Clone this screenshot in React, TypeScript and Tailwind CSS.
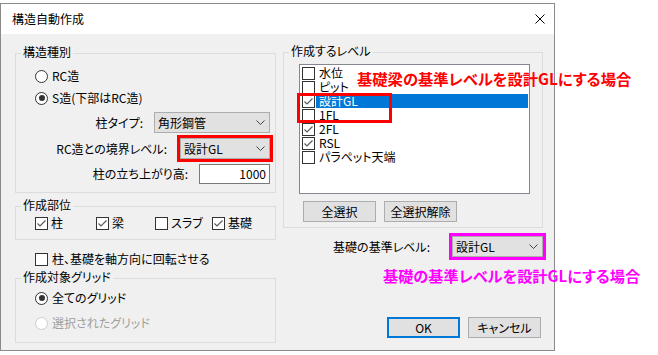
import React from "react";

function Group({ title, className = "", children }: { title: string; className?: string; children?: React.ReactNode }) {
  return (
    <div className={"relative border border-[#dcdcdc] " + className}>
      <span className="absolute -top-[10px] left-[5px] bg-[#f0f0f0] px-[2px] leading-[16px]">{title}</span>
      {children}
    </div>
  );
}

function Box({ checked }: { checked?: boolean }) {
  return (
    <span className="flex h-[13px] w-[13px] shrink-0 items-center justify-center border border-[#333333] bg-white">
      {checked && (
        <svg width="11" height="11" viewBox="0 0 11 11">
          <path d="M1.5 5.5 L4 8 L9.5 2.5" fill="none" stroke="#5a5a5a" strokeWidth="1.2" />
        </svg>
      )}
    </span>
  );
}

function Radio({ label, checked, disabled }: { label: string; checked?: boolean; disabled?: boolean }) {
  return (
    <div className="flex h-[14px] items-center gap-[4px]">
      <span
        className={
          "flex h-[13px] w-[13px] items-center justify-center rounded-full border bg-white " +
          (disabled ? "border-[#cccccc]" : "border-[#333333]")
        }
      >
        {checked && <span className="h-[6px] w-[6px] rounded-full bg-[#333333]" />}
      </span>
      <span className={disabled ? "text-[#a0a0a0]" : "text-black"}>{label}</span>
    </div>
  );
}

function Combo({ value, className = "" }: { value: string; className?: string }) {
  return (
    <div className={"flex h-[21px] items-center justify-between border border-[#adadad] bg-[#e1e1e1] pl-[3px] pr-[4px] " + className}>
      <span>{value}</span>
      <svg width="9" height="5" viewBox="0 0 9 5">
        <path d="M0.5 0.5 L4.5 4.5 L8.5 0.5" fill="none" stroke="#444444" strokeWidth="1" />
      </svg>
    </div>
  );
}

function Btn({ label, primary }: { label: string; primary?: boolean }) {
  return (
    <div
      className={
        "flex h-[21px] w-[73px] items-center justify-center bg-[#e1e1e1] " +
        (primary ? "border-2 border-[#0078d7]" : "border border-[#adadad]")
      }
    >
      {label}
    </div>
  );
}

const levels = [
  { name: "水位", checked: false },
  { name: "ピット", checked: false },
  { name: "設計GL", checked: true, selected: true },
  { name: "1FL", checked: false },
  { name: "2FL", checked: true },
  { name: "RSL", checked: true },
  { name: "パラペット天端", checked: false },
];

export default function App() {
  return (
    <div className="relative h-[355px] w-[658px] overflow-hidden bg-white pt-[3px] font-['Noto_Sans_CJK_JP','Noto_Sans_CJK_SC',sans-serif] text-[12px] leading-[14px] text-black [font-feature-settings:'palt']">
      {/* dialog */}
      <div className="h-[348px] w-[555px] border border-[#8a8a8a] bg-[#f0f0f0]">
        <div className="flex h-[30px] items-center justify-between bg-white pl-[11px] pr-[9px]">
          <span>構造自動作成</span>
          <svg width="10" height="10" viewBox="0 0 10 10">
            <path d="M0.5 0.5 L9.5 9.5 M9.5 0.5 L0.5 9.5" stroke="#000000" strokeWidth="1" />
          </svg>
        </div>

        <div className="flex pl-[14px]">
          {/* left column */}
          <div className="flex w-[261px] flex-col">
            <Group title="構造種別" className="mt-[19px] h-[140px] pl-[19px] pr-[5px] pt-[15px]">
              <Radio label="RC造" />
              <div className="mt-[8px]">
                <Radio label="S造(下部はRC造)" checked />
              </div>
              <div className="mt-[7px] flex items-center justify-end gap-[11px]">
                <span>柱タイプ:</span>
                <Combo value="角形鋼管" className="w-[116px]" />
              </div>
              <div className="mt-[5px] flex items-center justify-end gap-[13px]">
                <span>RC造との境界レベル:</span>
                <Combo value="設計GL" className="w-[90px] outline-3 outline-[#ff0000]" />
              </div>
              <div className="mt-[5px] flex items-center justify-end gap-[11px]">
                <span>柱の立ち上がり高:</span>
                <div className="flex h-[20px] w-[71px] items-center justify-end border border-[#7a7a7a] bg-white pr-[3px]">1000</div>
              </div>
            </Group>

            <Group title="作成部位" className="mt-[13px] h-[34px] pl-[19px] pt-[9px]">
              <div className="flex items-center">
                <div className="flex w-[61px] items-center gap-[3px]">
                  <Box checked />
                  <span>柱</span>
                </div>
                <div className="flex w-[59px] items-center gap-[3px]">
                  <Box checked />
                  <span>梁</span>
                </div>
                <div className="flex w-[57px] items-center gap-[3px]">
                  <Box />
                  <span>スラブ</span>
                </div>
                <div className="flex items-center gap-[3px]">
                  <Box checked />
                  <span>基礎</span>
                </div>
              </div>
            </Group>

            <div className="ml-[20px] mt-[12px] flex items-center gap-[4px]">
              <Box />
              <span>柱、基礎を軸方向に回転させる</span>
            </div>

            <Group title="作成対象グリッド" className="mt-[12px] h-[65px] pl-[19px] pt-[12px]">
              <Radio label="全てのグリッド" checked />
              <div className="mt-[11px]">
                <Radio label="選択されたグリッド" disabled />
              </div>
            </Group>
          </div>

          {/* right column */}
          <div className="ml-[7px] flex w-[260px] flex-col">
            <Group title="作成するレベル" className="mt-[18px] h-[176px]">
              <div className="ml-[15px] mt-[11px] h-[130px] w-[231px] border border-[#828790] bg-white pl-[2px] pr-[1px] pt-[1px]">
                {levels.map((l) => (
                  <div key={l.name} className="flex h-[14px] items-center">
                    <Box checked={l.checked} />
                    <span
                      className={
                        "ml-[1px] flex h-[14px] flex-1 items-center pl-[3px] " +
                        (l.selected ? "bg-[#0078d7] text-white" : "")
                      }
                    >
                      {l.name}
                    </span>
                  </div>
                ))}
              </div>
              <div className="ml-[19px] mt-[7px] flex gap-[8px]">
                <Btn label="全選択" />
                <Btn label="全選択解除" />
              </div>
            </Group>

            <div className="mt-[8px] flex items-center justify-end gap-[22px]">
              <span>基礎の基準レベル:</span>
              <Combo value="設計GL" className="w-[91px] outline-3 outline-[#ff00ff]" />
            </div>

            <div className="mt-[60px] flex justify-end gap-[8px] pr-[2px]">
              <Btn label="OK" primary />
              <Btn label="キャンセル" />
            </div>
          </div>
        </div>
      </div>

      {/* annotations */}
      <div className="absolute left-[297px] top-[93px] h-[30px] w-[95px] border-3 border-[#ff0000]" />
      <div className="absolute left-[357px] top-[68px] whitespace-nowrap text-[15.3px] font-bold leading-[20px] text-[#ff0000]">
        基礎梁の基準レベルを設計GLにする場合
      </div>
      <div className="absolute left-[383px] top-[265px] whitespace-nowrap text-[15.2px] font-bold leading-[20px] text-[#ff00ff]">
        基礎の基準レベルを設計GLにする場合
      </div>
    </div>
  );
}
